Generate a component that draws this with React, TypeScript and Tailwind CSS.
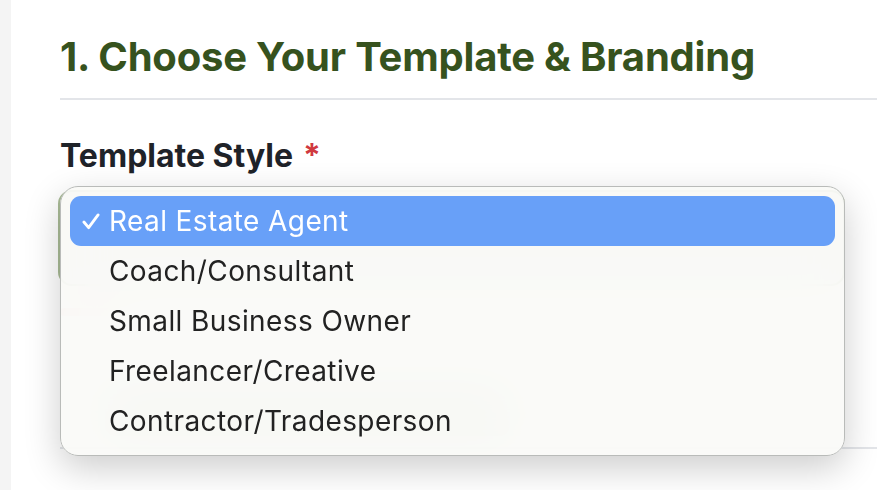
const options = [
  'Real Estate Agent',
  'Coach/Consultant',
  'Small Business Owner',
  'Freelancer/Creative',
  'Contractor/Tradesperson',
];

function Tick() {
  return (
    <svg viewBox="0 0 20 18" className="h-[17px] w-[20px]" fill="none" stroke="currentColor" strokeWidth={3} strokeLinecap="round" strokeLinejoin="round">
      <path d="M2.5 9.5 7.5 15.5 17.5 2" />
    </svg>
  );
}

export default function App() {
  const selected = 0;

  return (
    <div className="flex h-[490px] w-full overflow-hidden bg-[#f4f4f4] font-['Inter',sans-serif]">
      <div className="w-[11px] shrink-0" />
      <div className="relative flex-1 bg-white pl-[49px]">
        <h2 className="pt-[30px] text-[40px] leading-[54px] font-bold tracking-[-0.2px] text-[#36521e]">
          1. Choose Your Template &amp; Branding
        </h2>
        <div className="mt-[14px] h-[2px] bg-[#e3e5e9]" />

        <div className="mt-[34px] flex items-center text-[32px] leading-[44px] font-bold text-[#1f2329]">
          Template Style <span className="ml-[10px] text-[#d0393f]">*</span>
        </div>

        {/* the select and fields behind the open menu */}
        <div className="mt-[12px] mr-[32px] ml-[-2px] h-[96px] rounded-[14px] border-[2px] border-[#a9bb96] bg-[#f1f5ec]" />
        <div className="mt-[22px] h-[8px] w-[60px] rounded bg-[#f6c9ca]" />
        <div className="mt-[72px] ml-[45px] h-[48px] w-[405px] rounded-[10px] bg-[#dde8d1]" />
        <div className="mt-[11px] h-[2px] bg-[#e3e5e9]" />

        {/* open native select menu */}
        <div className="absolute top-[186px] left-[49px] h-[270px] w-[785px] rounded-[18px] border border-[#b9bbb9] bg-[#f9f9f7]/90 p-[9px] shadow-[0_12px_36px_rgba(0,0,0,0.2)] backdrop-blur-xl">
          {options.map((o, i) => (
            <div
              key={o}
              className={
                i === selected
                  ? 'flex h-[50px] items-center rounded-[11px] bg-[#68a0f8] text-white'
                  : 'flex h-[50px] items-center text-[#222222]'
              }
            >
              <span className="flex w-[39px] justify-end pr-[8px]">
                {i === selected && <Tick />}
              </span>
              <span className="text-[28px] leading-none tracking-[0.4px]">{o}</span>
            </div>
          ))}
        </div>
      </div>
    </div>
  );
}
